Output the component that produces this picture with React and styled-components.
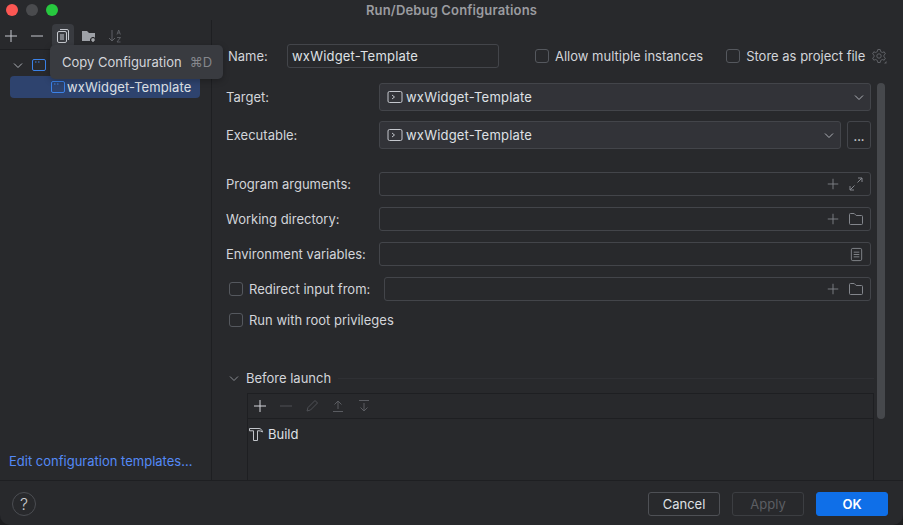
import React from "react";
import styled, { createGlobalStyle } from "styled-components";

const Global = createGlobalStyle`
  html, body { margin: 0; padding: 0; background: #1d1e20; }
  * { box-sizing: border-box; }
`;

const Win = styled.div`
  width: 903px;
  height: 525px;
  background: #28292c;
  color: #d3d5da;
  font-family: Inter, "Liberation Sans", sans-serif;
  font-size: 13px;
  border-radius: 0 0 10px 10px;
  overflow: hidden;
  display: flex;
  flex-direction: column;
  position: relative;
`;

const TitleBar = styled.div`
  height: 20px;
  flex: none;
  display: flex;
  align-items: center;
  justify-content: center;
  position: relative;
  font-size: 13px;
  font-weight: 600;
  letter-spacing: 0.15px;
  color: #9b9ca0;
`;

const Lights = styled.div`
  position: absolute;
  left: 6px;
  top: 4px;
  display: flex;
  gap: 8px;
`;

const Light = styled.span`
  width: 12px;
  height: 12px;
  border-radius: 50%;
  background: ${(p) => p.$c};
`;

const Body = styled.div`
  flex: 1;
  display: flex;
  min-height: 0;
`;

const Sidebar = styled.div`
  width: 212px;
  flex: none;
  border-right: 1px solid #1e1f22;
  display: flex;
  flex-direction: column;
  position: relative;
`;

const Toolbar = styled.div`
  height: 30px;
  flex: none;
  display: flex;
  align-items: center;
  gap: 4px;
  padding: 2px 0 0 0;
  border-bottom: 1px solid #1e1f22;
`;

const ToolBtn = styled.div`
  width: 22px;
  height: 24px;
  display: flex;
  align-items: center;
  justify-content: center;
  border-radius: 4px;
  background: ${(p) => (p.$on ? "#393b40" : "transparent")};
`;

const Tooltip = styled.div`
  position: absolute;
  left: 50px;
  top: 25px;
  width: 173px;
  height: 34px;
  background: #393b40;
  border-radius: 5px;
  display: flex;
  align-items: center;
  padding-left: 12px;
  font-size: 13px;
  color: #d3d5da;
  z-index: 3;
  box-shadow: 0 2px 6px rgba(0, 0, 0, 0.25);
`;

const Shortcut = styled.span`
  color: #85878c;
  margin-left: 8px;
`;

const Tree = styled.div`
  flex: 1;
  padding: 4px 10px 0 10px;
  display: flex;
  flex-direction: column;
`;

const TreeRow = styled.div`
  height: 22px;
  width: 190px;
  display: flex;
  align-items: center;
  border-radius: 4px;
  padding-left: ${(p) => p.$indent}px;
  background: ${(p) => (p.$sel ? "#2e436e" : "transparent")};
  color: #dfe1e5;
  font-size: 13px;
  letter-spacing: 0.1px;
  gap: ${(p) => p.$gap ?? 1}px;
`;

const TemplatesLink = styled.div`
  color: #548af7;
  font-size: 13px;
  padding: 0 0 11px 9px;
`;

const Main = styled.div`
  flex: 1;
  min-width: 0;
  padding: 24px 32px 0 14px;
  position: relative;
  overflow: hidden;
`;

const NameRow = styled.div`
  height: 24px;
  display: flex;
  align-items: center;
  padding-left: 2px;
  margin-bottom: 15px;
  white-space: nowrap;
`;

const NameLabel = styled.span`
  width: 59px;
  flex: none;
`;

const NameInput = styled.div`
  width: 212px;
  height: 24px;
  flex: none;
  border: 1px solid #43454a;
  border-radius: 3px;
  display: flex;
  align-items: center;
  padding: 0 4px;
  color: #dfe1e5;
  letter-spacing: 0.2px;
`;

const Input = styled.div`
  height: 24px;
  border: 1px solid #43454a;
  border-radius: 3px;
  display: flex;
  align-items: center;
  justify-content: flex-end;
  padding: 0 6px;
  flex: 1;
  gap: 8px;
  min-width: 0;
`;

const Check = styled.label`
  display: flex;
  align-items: center;
  gap: 6px;
  flex: none;
  color: #d3d5da;
  margin-left: ${(p) => p.$ml || 0}px;
  width: ${(p) => (p.$w ? `${p.$w}px` : "auto")};
`;

const Box = styled.span`
  width: 14px;
  height: 14px;
  border: 1px solid #55585e;
  border-radius: 3px;
  flex: none;
`;

const Row = styled.div`
  display: flex;
  align-items: center;
  height: ${(p) => p.$h || 24}px;
  margin-bottom: ${(p) => p.$mb ?? 11}px;
  gap: 6px;
`;

const Label = styled.span`
  width: 147px;
  flex: none;
  white-space: nowrap;
`;

const Combo = styled.div`
  flex: 1;
  height: 28px;
  min-width: 0;
  background: #323338;
  border: 1px solid #43454a;
  border-radius: 3px;
  display: flex;
  align-items: center;
  padding: 0 3px 0 7px;
  gap: 3px;
  color: #dfe1e5;
`;

const ComboText = styled.span`
  flex: 1;
  letter-spacing: 0.2px;
`;

const Dots = styled.div`
  width: 24px;
  height: 28px;
  flex: none;
  border: 1px solid #43454a;
  border-radius: 3px;
  display: flex;
  align-items: center;
  justify-content: center;
  font-weight: 700;
  font-size: 11px;
  line-height: 1;
  padding-top: 4px;
`;

const Scroll = styled.div`
  position: absolute;
  right: 18px;
  top: 63px;
  width: 8px;
  height: 336px;
  background: #46484c;
  border-radius: 4px;
`;

const SectionHead = styled.div`
  display: flex;
  align-items: center;
  height: 20px;
  margin: 40px -3px 5px 0;
  gap: 4px;
`;

const SectionLine = styled.span`
  flex: 1;
  height: 1px;
  margin-left: 3px;
  background: #2f3034;
`;

const TaskBox = styled.div`
  margin: 0 -3px 0 21px;
  border: 1px solid #1e1f22;
  border-bottom: 0;
  height: 90px;
`;

const TaskBar = styled.div`
  height: 25px;
  border-bottom: 1px solid #1e1f22;
  display: flex;
  align-items: center;
  padding-left: 2px;
  gap: 6px;
`;

const TaskIcon = styled.span`
  width: 20px;
  height: 20px;
  display: flex;
  align-items: center;
  justify-content: center;
`;

const TaskRow = styled.div`
  display: flex;
  align-items: center;
  gap: 4px;
  height: 22px;
  margin-top: 4px;
  color: #dfe1e5;
`;

const Footer = styled.div`
  height: 45px;
  flex: none;
  border-top: 1px solid #1e1f22;
  display: flex;
  align-items: center;
  padding: 2px 15px 0 12px;
  gap: 12px;
`;

const Help = styled.div`
  width: 24px;
  height: 24px;
  border: 1px solid #4b4d52;
  border-radius: 50%;
  display: flex;
  align-items: center;
  justify-content: center;
  font-size: 16px;
  font-weight: 300;
  color: #c8cacf;
  margin-right: auto;
`;

const Btn = styled.div`
  width: 72px;
  height: 24px;
  border-radius: 3px;
  display: flex;
  align-items: center;
  justify-content: center;
  border: 1px solid ${(p) => (p.$primary ? "#0f6fe8" : p.$off ? "#3c3e42" : "#4e5055")};
  background: ${(p) => (p.$primary ? "#0f6fe8" : "transparent")};
  color: ${(p) => (p.$primary ? "#fff" : p.$off ? "#5c5e63" : "#dfe1e5")};
  font-weight: ${(p) => (p.$primary ? 600 : 400)};
`;

const Ico = ({ s = 16, c = "#c4c7cd", children, w = 1 }) => (
  <svg width={s} height={s} viewBox="0 0 16 16" fill="none" stroke={c} strokeWidth={w} style={{ flex: "none" }}>
    {children}
  </svg>
);

const Plus = ({ c, s }) => (
  <Ico c={c} s={s}>
    <path d="M8 2v12M2 8h12" />
  </Ico>
);
const Minus = ({ c }) => (
  <Ico c={c}>
    <path d="M2 8h12" />
  </Ico>
);
const Chevron = ({ c = "#aeb1b7" }) => (
  <Ico c={c}>
    <path d="M4 6.500l4 4 4-4" />
  </Ico>
);
const Folder = ({ c = "#83868c" }) => (
  <Ico c={c}>
    <path d="M1.500 12.500v-9a1 1 0 0 1 1-1h3.700l2 2h5.300a1 1 0 0 1 1 1v7a1 1 0 0 1-1 1h-11a1 1 0 0 1-1-1z" />
  </Ico>
);
const Terminal = () => (
  <Ico>
    <rect x="1" y="2.500" width="14" height="11" rx="1.500" />
    <path d="M5 6l2.500 2L5 10" />
  </Ico>
);
const AppIcon = () => (
  <Ico c="#3b82e8">
    <rect x="1.500" y="2.500" width="13" height="11" rx="1.500" />
    <path d="M4 5h1.500M7 5h1.500" />
  </Ico>
);

export default function App() {
  return (
    <>
      <Global />
      <Win>
        <TitleBar>
          <Lights>
            <Light $c="#fc5753" />
            <Light $c="#4a4b4e" />
            <Light $c="#27c83f" />
          </Lights>
          Run/Debug Configurations
        </TitleBar>
        <Body>
          <Sidebar>
            <Toolbar>
              <ToolBtn>
                <Plus />
              </ToolBtn>
              <ToolBtn>
                <Minus />
              </ToolBtn>
              <ToolBtn $on>
                <Ico>
                  <rect x="2.500" y="3.500" width="9" height="11" rx="1.500" />
                  <path d="M5 1.500h7a1.500 1.500 0 0 1 1.500 1.500v9M5 7h4M5 9h4M5 11h4" />
                </Ico>
              </ToolBtn>
              <ToolBtn>
                <svg width="16" height="16" viewBox="0 0 16 16">
                  <path d="M1 3h5l2 2h6v8H1z" fill="#9ea1a7" />
                  <path d="M12 9v6M9 12h6" stroke="#28292c" strokeWidth="3" />
                  <path d="M12 10v4M10 12h4" stroke="#c2c5ca" strokeWidth="1.200" />
                </svg>
              </ToolBtn>
              <ToolBtn>
                <svg width="16" height="16" viewBox="0 0 16 16" fill="none" stroke="#5f6166">
                  <path d="M5 2v11M2 10l3 3 3-3" />
                  <path d="M10 6.500l1.700-4.500 1.700 4.500M10.700 5h2M10 9.500h3.500L10 14h3.500" strokeWidth="0.900" />
                </svg>
              </ToolBtn>
            </Toolbar>
            <Tooltip>
              Copy Configuration<Shortcut>⌘D</Shortcut>
            </Tooltip>
            <Tree>
              <TreeRow $indent={0} $gap={5}>
                <Chevron />
                <AppIcon />
              </TreeRow>
              <TreeRow $sel $indent={40}>
                <AppIcon />
                wxWidget-Template
              </TreeRow>
            </Tree>
            <TemplatesLink>Edit configuration templates...</TemplatesLink>
          </Sidebar>
          <Main>
            <NameRow>
              <NameLabel>Name:</NameLabel>
              <NameInput>wxWidget-Template</NameInput>
              <Check $ml={36}>
                <Box />
                Allow multiple instances
              </Check>
              <Check $ml={23}>
                <Box />
                Store as project file
                <Ico c="#5f6166">
                  <path d="M6.800 1.500h2.400l.4 2 1.700 1 1.900-.7 1.200 2.100-1.500 1.300v1.600l1.500 1.300-1.200 2.100-1.900-.7-1.700 1-.4 2H6.800l-.4-2-1.700-1-1.900.7-1.200-2.100 1.500-1.300V7.200L1.600 5.900l1.200-2.100 1.900.7 1.700-1z" />
                  <circle cx="8" cy="8" r="2.200" />
                  <path d="M15.500 13v2.500H13z" fill="#5f6166" stroke="none" />
                </Ico>
              </Check>
            </NameRow>
            <Row $h={28} $mb={10}>
              <Label>Target:</Label>
              <Combo>
                <Terminal />
                <ComboText>wxWidget-Template</ComboText>
                <Chevron />
              </Combo>
            </Row>
            <Row $h={28} $mb={23}>
              <Label>Executable:</Label>
              <Combo>
                <Terminal />
                <ComboText>wxWidget-Template</ComboText>
                <Chevron />
              </Combo>
              <Dots>...</Dots>
            </Row>
            <Row>
              <Label>Program arguments:</Label>
              <Input>
                <Plus c="#83868c" s={14} />
                <Ico c="#83868c">
                  <path d="M9.500 6.500L14 2M10 2h4v4M6.500 9.500L2 14M2 10v4h4" />
                </Ico>
              </Input>
            </Row>
            <Row>
              <Label>Working directory:</Label>
              <Input>
                <Plus c="#83868c" s={14} />
                <Folder />
              </Input>
            </Row>
            <Row>
              <Label>Environment variables:</Label>
              <Input>
                <Ico c="#83868c" s={15}>
                  <rect x="2.500" y="1.500" width="11" height="13" rx="1.500" />
                  <path d="M5 5.500h6M5 8h6M5 10.500h6" />
                </Ico>
              </Input>
            </Row>
            <Row>
              <Check $ml={3} $w={149}>
                <Box />
                Redirect input from:
              </Check>
              <Input>
                <Plus c="#83868c" s={14} />
                <Folder />
              </Input>
            </Row>
            <Row $h={16}>
              <Check $ml={3}>
                <Box />
                Run with root privileges
              </Check>
            </Row>
            <SectionHead>
              <Chevron c="#8a8d93" />
              Before launch
              <SectionLine />
            </SectionHead>
            <TaskBox>
              <TaskBar>
                <TaskIcon>
                  <Plus c="#d3d5da" />
                </TaskIcon>
                <TaskIcon>
                  <Minus c="#4e5055" />
                </TaskIcon>
                <TaskIcon>
                  <Ico c="#4e5055">
                    <path d="M3 13l1-3.500L11 2.500l2.500 2.500L6.500 12z" />
                  </Ico>
                </TaskIcon>
                <TaskIcon>
                  <Ico c="#5a5c61">
                    <path d="M8 11V3M4.500 6.500L8 3l3.500 3.500M3 13.500h10" />
                  </Ico>
                </TaskIcon>
                <TaskIcon>
                  <Ico c="#5a5c61">
                    <path d="M8 5v8M4.500 9.500L8 13l3.500-3.500M3 2.500h10" />
                  </Ico>
                </TaskIcon>
              </TaskBar>
              <TaskRow>
                <Ico c="#c2c5ca">
                  <path d="M1.500 2.500h9.500c1.600 0 3 1.200 3.500 3.500-1-.8-2.200-1.200-3.500-1.200H9.500v9.700h-4V4.800h-4z" />
                </Ico>
                Build
              </TaskRow>
            </TaskBox>
            <Scroll />
          </Main>
        </Body>
        <Footer>
          <Help>?</Help>
          <Btn>Cancel</Btn>
          <Btn $off>Apply</Btn>
          <Btn $primary>OK</Btn>
        </Footer>
      </Win>
    </>
  );
}
